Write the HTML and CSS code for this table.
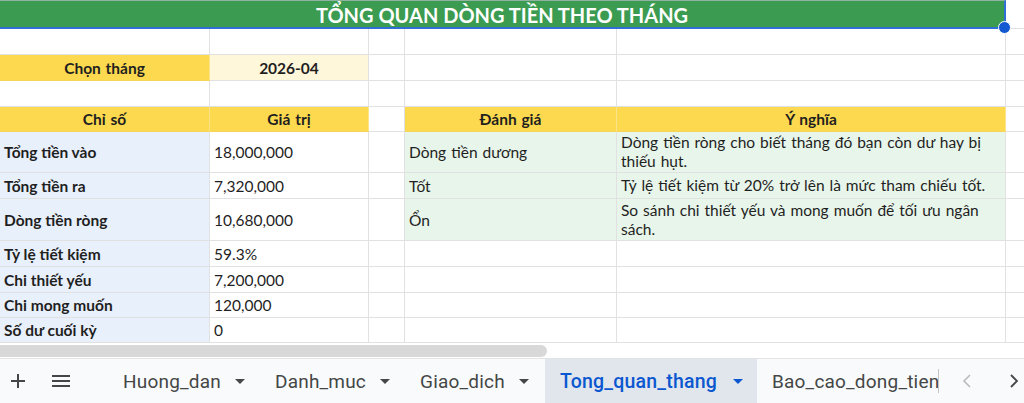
FILE: index.html
```html
<!DOCTYPE html>
<html lang="vi">
<head>
<meta charset="utf-8">
<title>Tong quan thang</title>
<link rel="stylesheet" href="styles.css">
</head>
<body>
<div class="sheet">
  <div class="grid">
    <div class="c title">TỔNG QUAN DÒNG TIỀN THEO THÁNG<span class="handle"></span></div>
    <div class="c f"></div>

    <div class="c"></div><div class="c"></div><div class="c"></div><div class="c"></div><div class="c"></div><div class="c f"></div>

    <div class="c yel center b">Chọn tháng</div><div class="c inp center b">2026-04</div><div class="c"></div><div class="c"></div><div class="c"></div><div class="c f"></div>

    <div class="c"></div><div class="c"></div><div class="c"></div><div class="c"></div><div class="c"></div><div class="c f"></div>

    <div class="c yel center b">Chỉ số</div><div class="c yel center b">Giá trị</div><div class="c"></div><div class="c yel center b">Đánh giá</div><div class="c yel center b">Ý nghĩa</div><div class="c f"></div>

    <div class="c lab">Tổng tiền vào</div><div class="c val">18,000,000</div><div class="c"></div><div class="c grn">Dòng tiền dương</div><div class="c grn wrap">Dòng tiền ròng cho biết tháng đó bạn còn dư hay bị thiếu hụt.</div><div class="c f"></div>

    <div class="c lab">Tổng tiền ra</div><div class="c val">7,320,000</div><div class="c"></div><div class="c grn">Tốt</div><div class="c grn wrap">Tỷ lệ tiết kiệm từ 20% trở lên là mức tham chiếu tốt.</div><div class="c f"></div>

    <div class="c lab">Dòng tiền ròng</div><div class="c val">10,680,000</div><div class="c"></div><div class="c grn">Ổn</div><div class="c grn wrap">So sánh chi thiết yếu và mong muốn để tối ưu ngân sách.</div><div class="c f"></div>

    <div class="c lab">Tỷ lệ tiết kiệm</div><div class="c val">59.3%</div><div class="c"></div><div class="c"></div><div class="c"></div><div class="c f"></div>

    <div class="c lab">Chi thiết yếu</div><div class="c val">7,200,000</div><div class="c"></div><div class="c"></div><div class="c"></div><div class="c f"></div>

    <div class="c lab">Chi mong muốn</div><div class="c val">120,000</div><div class="c"></div><div class="c"></div><div class="c"></div><div class="c f"></div>

    <div class="c lab">Số dư cuối kỳ</div><div class="c val">0</div><div class="c"></div><div class="c"></div><div class="c"></div><div class="c f"></div>
  </div>
  <div class="hscroll"><div class="thumb"></div></div>
  <div class="tabbar">
    <div class="icon plus">
      <svg width="14" height="14" viewBox="0 0 14 14"><path d="M7 0v14M0 7h14" stroke="#444746" stroke-width="2"/></svg>
    </div>
    <div class="icon menu">
      <svg width="18" height="12" viewBox="0 0 18 12"><path d="M0 1h18M0 6h18M0 11h18" stroke="#444746" stroke-width="2"/></svg>
    </div>
    <div class="tab t1">Huong_dan<span class="caret"></span></div>
    <div class="tab t2">Danh_muc<span class="caret"></span></div>
    <div class="tab t3">Giao_dich<span class="caret"></span></div>
    <div class="tab active">Tong_quan_thang<span class="caret"></span></div>
    <div class="tab clip">Bao_cao_dong_tien</div>
    <div class="nav prev">
      <svg width="10" height="16" viewBox="0 0 10 16"><path d="M8 2L2 8l6 6" fill="none" stroke="#b9bbbe" stroke-width="1.6"/></svg>
    </div>
    <div class="nav next">
      <svg width="10" height="16" viewBox="0 0 10 16"><path d="M2 2l6 6-6 6" fill="none" stroke="#444746" stroke-width="1.8"/></svg>
    </div>
  </div>
</div>
</body>
</html>
```

FILE: styles.css
```css
html, body {
  margin: 0;
  padding: 0;
  background: #ffffff;
}
.sheet {
  width: 1024px;
  height: 403px;
  overflow: hidden;
  display: flex;
  flex-direction: column;
  font-family: "Lato", "Open Sans", sans-serif;
  color: #1f1f1f;
}
.grid {
  display: grid;
  grid-template-columns: 210px 159px 36px 212px 389px 18px;
  grid-template-rows: 29px 26px 26px 26px 25px 41px 26px 42px 26px 26px 25px 25px;
  height: 343px;
}
.c {
  border-right: 1px solid #e1e1e1;
  border-bottom: 1px solid #e1e1e1;
  font-size: 15.5px;
  word-spacing: 1px;
  display: flex;
  align-items: center;
  padding: 0 4px;
  white-space: nowrap;
  overflow: hidden;
  position: relative;
}
.c.f { border-right: none; }
.title {
  grid-column: 1 / 6;
  background: #3a9b51;
  color: #ffffff;
  font-weight: 700;
  font-size: 20px;
  word-spacing: 0;
  justify-content: center;
  border-top: 1px solid #8fb3a0;
  border-bottom: 2px solid #2f6fd6;
  border-right: 2px solid #2f6fd6;
  overflow: visible;
  z-index: 2;
  padding-top: 1px;
}
.handle {
  position: absolute;
  right: -7px;
  bottom: -7px;
  width: 11px;
  height: 11px;
  border-radius: 50%;
  background: #1459d1;
  border: 1px solid #ffffff;
}
.yel { background: #fdd94f; border-right-color: #fbe38a; border-bottom-color: #f5d45a; }
.inp { background: #fff7da; }
.center { justify-content: center; }
.b { font-weight: 700; }
.lab { background: #e8f0fb; font-weight: 700; word-spacing: 0; }
.val { background: #ffffff; }
.grn { background: #e8f5ea; }
.wrap { white-space: normal; line-height: 19px; }
.hscroll {
  height: 15px;
  border-bottom: 1px solid #e3e3e3;
  display: flex;
  align-items: center;
}
.thumb {
  width: 547px;
  height: 12px;
  background: #d8d8d8;
  border-radius: 0 7px 7px 0;
}
.tabbar {
  flex: 1;
  display: flex;
  align-items: stretch;
  overflow: hidden;
  background: #f9fafc;
  font-family: "Roboto", "Open Sans", sans-serif;
  font-size: 19px;
  letter-spacing: 0.2px;
  color: #444746;
}
.tabbar > div { flex-shrink: 0; }
.icon {
  display: flex;
  align-items: center;
  justify-content: center;
}
.plus { width: 36px; }
.menu { width: 50px; margin-right: 22px; }
.tab {
  display: flex;
  align-items: center;
  padding: 0 15px;
  white-space: nowrap;
  box-sizing: border-box;
}
.caret {
  display: inline-block;
  margin-left: 14px;
  width: 0;
  height: 0;
  border-left: 5px solid transparent;
  border-right: 5px solid transparent;
  border-top: 5px solid #444746;
}
.t1 { width: 152px; }
.t2 { width: 145px; }
.t3 { width: 140px; }
.active {
  background: #e1e6ed;
  color: #0b57d0;
  font-weight: 500;
  font-size: 19.5px;
  width: 212px;
}
.active .caret { border-top-color: #0b57d0; margin-left: 16px; }
.clip {
  width: 182px;
  overflow: hidden;
  padding-left: 15px;
  padding-right: 0;
  position: relative;
}
.clip::after {
  content: "";
  position: absolute;
  right: 0;
  top: 10px;
  bottom: 10px;
  border-right: 1px solid #c4c7c5;
}
.nav {
  display: flex;
  align-items: center;
  justify-content: center;
}
.prev { width: 56px; }
.next { width: 38px; }
```
